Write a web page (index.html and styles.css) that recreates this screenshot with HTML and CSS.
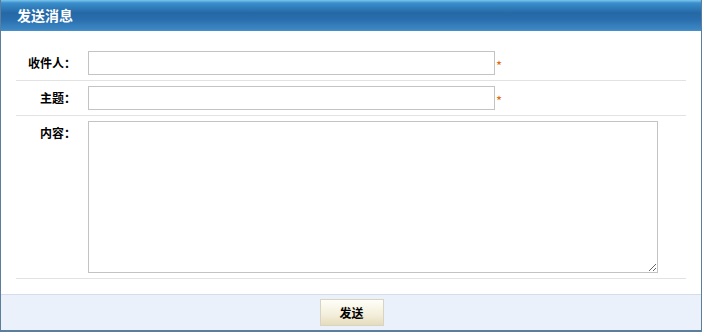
FILE: index.html
```html
<!DOCTYPE html>
<html>
<head>
    <meta charset="utf-8">
    <title>发送消息</title>
    <link rel="stylesheet" href="styles.css">
</head>
<body>

<div class="panel">
    <div class="panel-title">发送消息</div>

    <form class="msg-form" action="">
        <div class="form-row">
            <label class="form-label">收件人：</label>
            <input class="form-input" type="text" autocomplete="off"><span class="required">*</span>
        </div>
        <div class="form-row">
            <label class="form-label">主题：</label>
            <input class="form-input" type="text" autocomplete="off"><span class="required">*</span>
        </div>
        <div class="form-row">
            <label class="form-label">内容：</label>
            <textarea class="form-text"></textarea>
        </div>
    </form>

    <div class="panel-footer">
        <button class="send-btn" type="button">发送</button>
    </div>
</div>

</body>
</html>
```

FILE: styles.css
```css
body {
    margin: 0;
    background: #fff;
    font-family: "Noto Sans CJK SC", "Liberation Sans", sans-serif;
    font-size: 12px;
    color: #000;
}

.panel {
    width: 700px;
    border: 1px solid #5b7e9c;
    border-top: none;
    background: #fff;
}

.panel-title {
    height: 31px;
    line-height: 31px;
    padding-left: 16px;
    color: #fff;
    font-size: 14px;
    font-weight: bold;
    background: linear-gradient(to bottom, #7cc6ec 0px, #3a8fcc 3px, #2568a6 13px, #2a6fae 20px, #3c86c4 29px, #4a8fc8 31px);
}

.msg-form {
    padding: 15px 15px 15px 15px;
}

.form-row {
    display: flex;
    align-items: flex-start;
    padding: 5px 0;
    border-bottom: 1px solid #e2e2e2;
}

.form-label {
    width: 60px;
    padding-right: 12px;
    text-align: right;
    font-weight: bold;
    line-height: 24px;
}

.form-input {
    width: 407px;
    height: 24px;
    box-sizing: border-box;
    border: 1px solid #c3c3c3;
    margin: 0;
    padding: 0 4px;
    outline: none;
}

.required {
    color: #e06a10;
    font-size: 13px;
    line-height: 24px;
    height: 24px;
    padding: 3px 0 0 1px;
    box-sizing: border-box;
}

.form-text {
    width: 570px;
    height: 152px;
    box-sizing: border-box;
    border: 1px solid #c3c3c3;
    margin: 0;
    padding: 2px 4px;
    outline: none;
    display: block;
}

.panel-footer {
    height: 35px;
    border-top: 1px solid #d6dde8;
    border-bottom: 1px solid #5b7e9c;
    background: #ebf1fa;
    display: flex;
    justify-content: center;
    align-items: center;
}

.send-btn {
    width: 64px;
    height: 27px;
    border: 1px solid #d8d4c4;
    background: linear-gradient(to bottom, #fffff8, #f3eedb 60%, #e6dcbc);
    font-family: "Noto Sans CJK SC", sans-serif;
    font-size: 12px;
    font-weight: bold;
    color: #000;
    padding: 0;
    margin-left: 1px;
}
```
